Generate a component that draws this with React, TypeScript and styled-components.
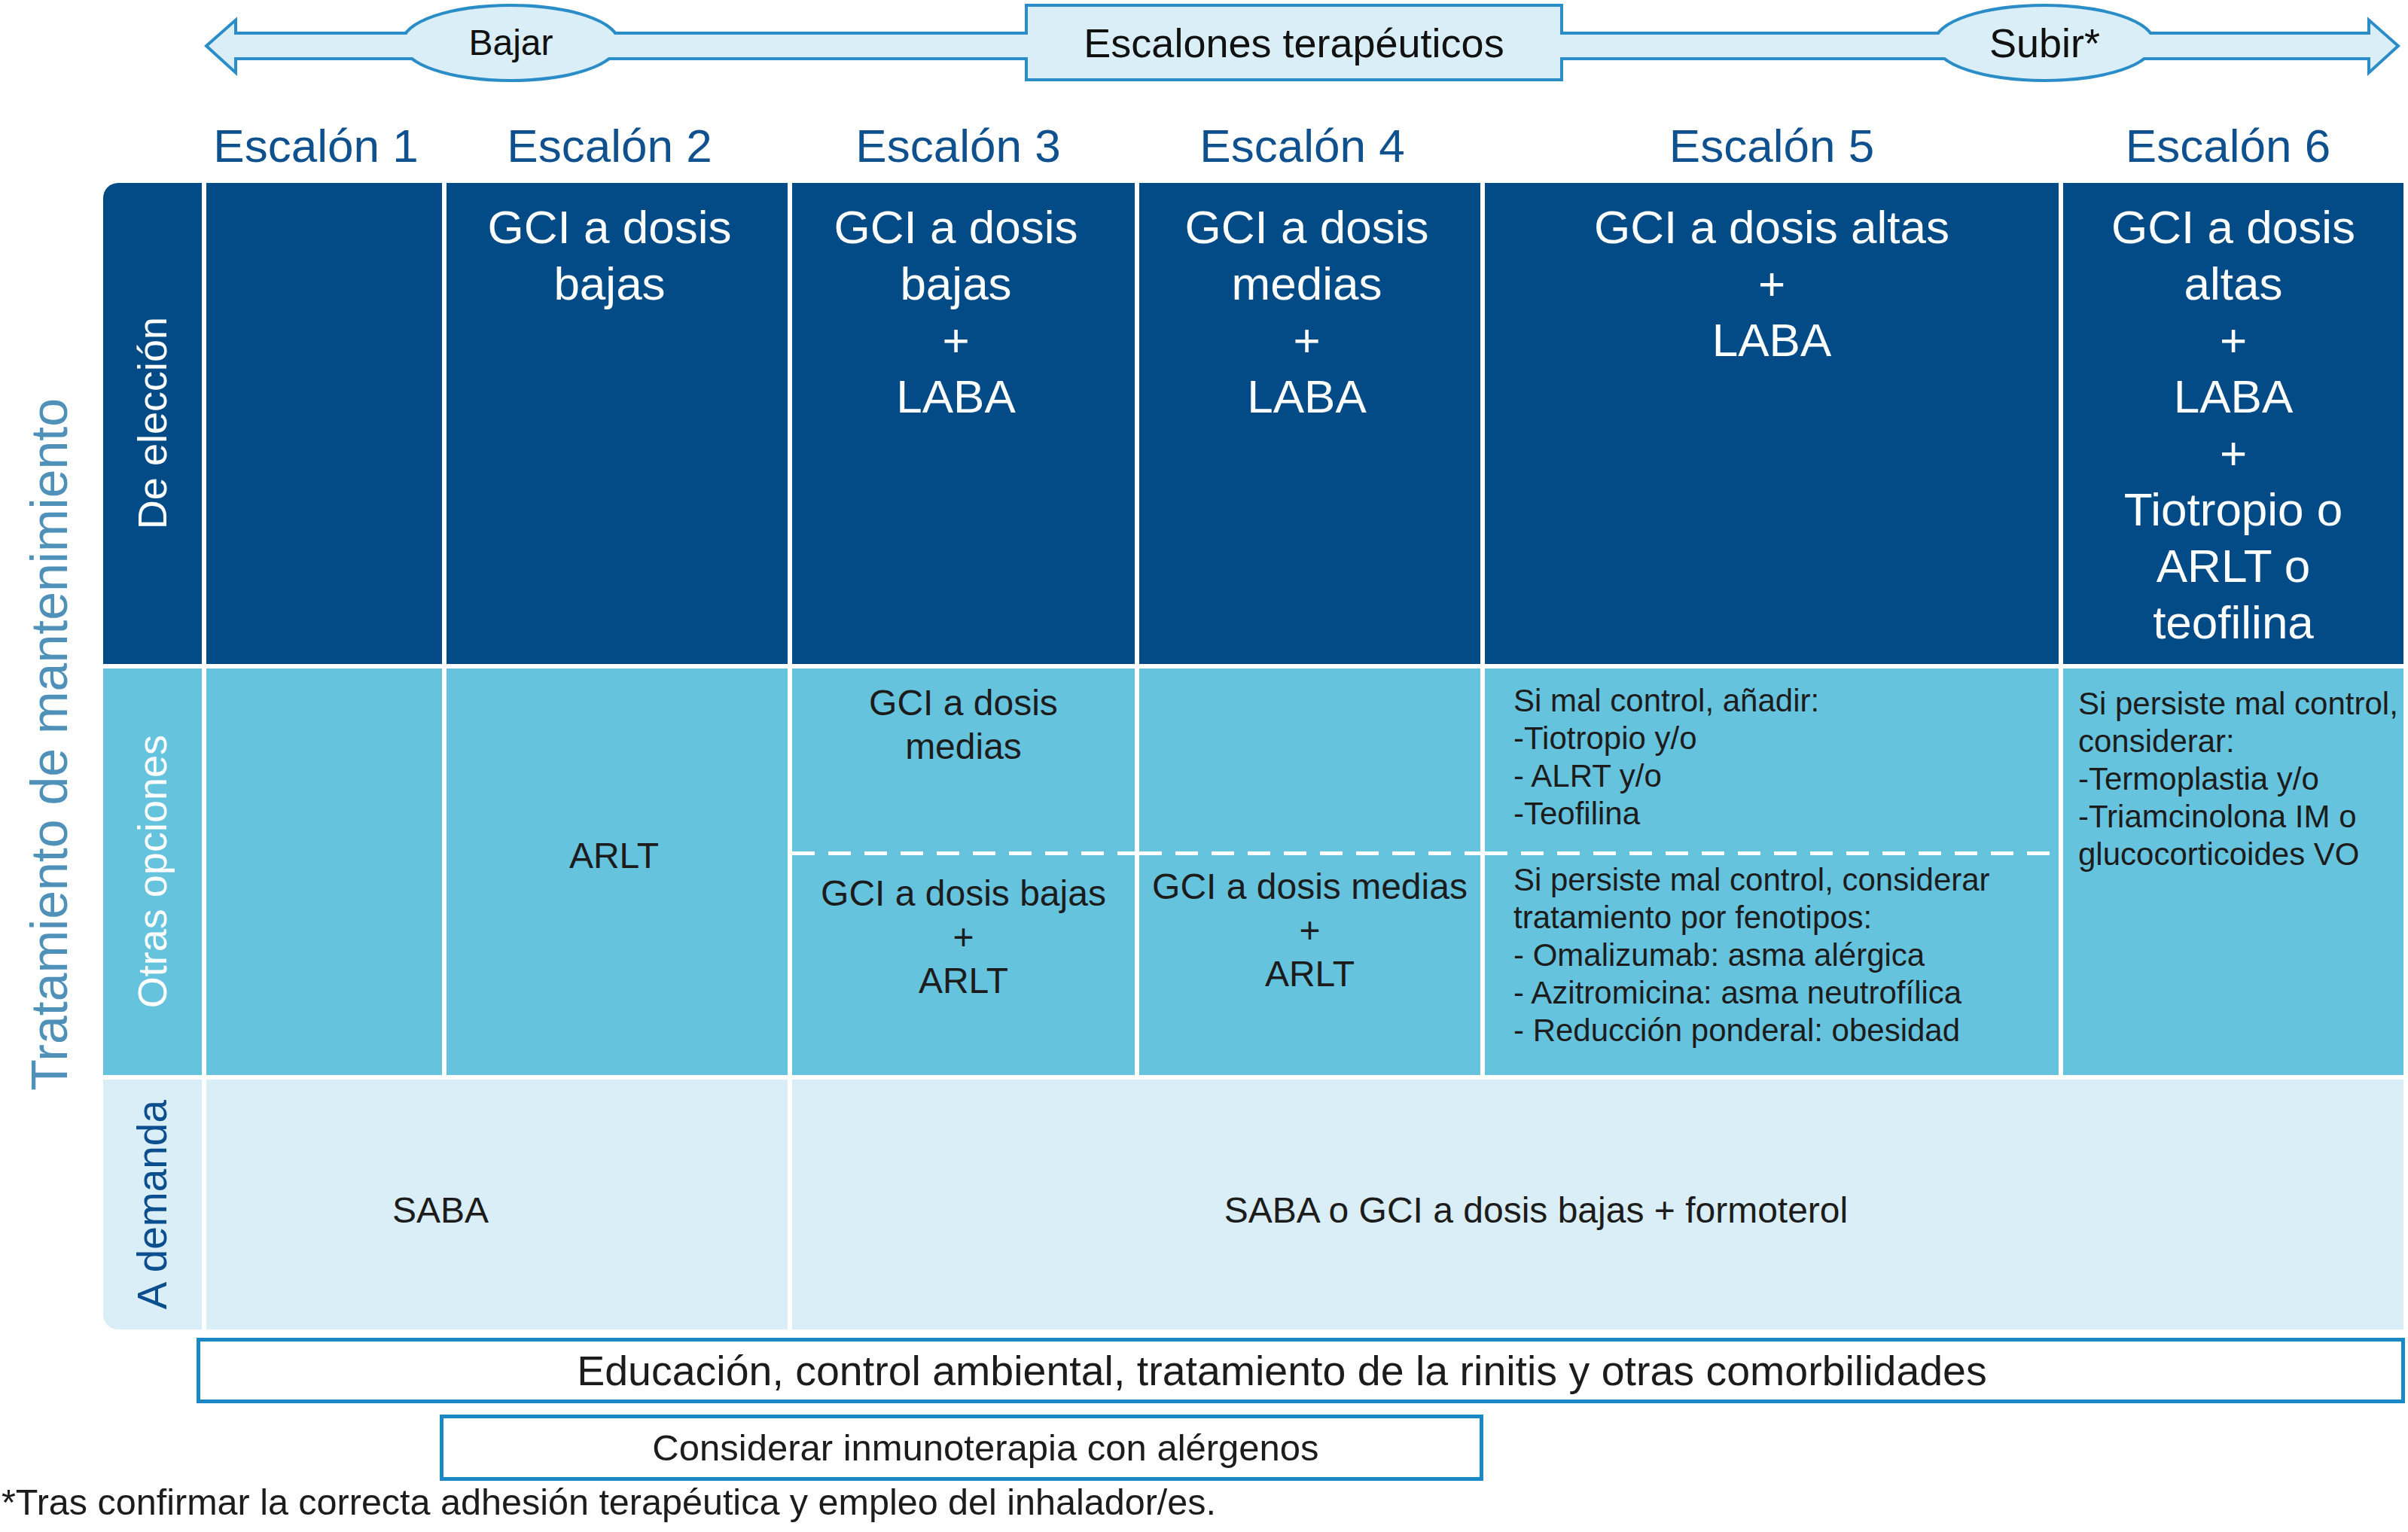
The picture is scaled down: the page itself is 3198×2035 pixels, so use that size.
import React from 'react';
import styled, { createGlobalStyle } from 'styled-components';

const NAVY = '#034b87';
const CYAN = '#66c3de';
const PALE = '#d9eef6';
const LINE = '#2a8dc8';
const INK = '#1c1c1c';

const GlobalStyle = createGlobalStyle`
  html, body {
    margin: 0;
    padding: 0;
    background: #fff;
  }
  body {
    font-family: "Liberation Sans", Arial, sans-serif;
  }
`;

const Page = styled.div`
  width: 3198px;
  min-height: 2035px;
  display: flex;
  flex-direction: column;
  overflow: hidden;
`;

/**
 * Flecha de escalones (Bajar / Subir)
 */
const StepBar = styled.div`
  position: relative;
  height: 110px;
  display: grid;
  grid-template-columns: 533px 291px 537px 715px 492px 295px 1fr;
  align-items: center;
`;

const ArrowArt = styled.svg`
  position: absolute;
  left: 0;
  top: 0;
  width: 3198px;
  height: 110px;
`;

interface IStepLabelProps {
  $col: number;
  $size: number;
}
const StepLabel = styled.div<IStepLabelProps>`
  position: relative;
  grid-row: 1;
  grid-column: ${(p) => p.$col};
  text-align: center;
  font-size: ${(p) => p.$size}px;
  line-height: 1.15;
  color: #111;
  padding-top: 4px;
`;

/**
 * Tabla principal
 */
const Chart = styled.div`
  display: grid;
  grid-template-columns: 131px 131px 313px 453px 455px 453px 762px 452px;
  grid-template-rows: 127px 639px 540px 332px;
  column-gap: 6px;
  row-gap: 6px;
`;

const StepHeader = styled.div<{ $col: number; $shift: number }>`
  grid-row: 1;
  grid-column: ${(p) => p.$col};
  display: flex;
  align-items: flex-end;
  justify-content: center;
  padding-bottom: 12px;
  padding-right: ${(p) => p.$shift}px;
  font-size: 62px;
  line-height: 62px;
  color: #0e518e;
  white-space: nowrap;
`;

const SideTitle = styled.div`
  grid-column: 1;
  grid-row: 2 / 5;
  display: flex;
  align-items: center;
  justify-content: center;
  padding-bottom: 32px;
`;

const VerticalText = styled.span<{ $color: string; $size: number }>`
  writing-mode: vertical-rl;
  transform: rotate(180deg);
  white-space: nowrap;
  font-size: ${(p) => p.$size}px;
  line-height: 1.1;
  color: ${(p) => p.$color};
`;

interface ICellProps {
  $tone: string;
  $row: number;
  $col: string;
  $corner?: string;
}
const Cell = styled.div<ICellProps>`
  grid-row: ${(p) => p.$row};
  grid-column: ${(p) => p.$col};
  background: ${(p) => p.$tone};
  border-radius: ${(p) => p.$corner || '0'};
  display: flex;
  flex-direction: column;
  min-width: 0;
`;

const RowHead = styled(Cell)`
  align-items: center;
  justify-content: center;
`;

const ChoiceText = styled.div<{ $shift: number }>`
  padding-top: 21px;
  padding-right: ${(p) => p.$shift}px;
  text-align: center;
  color: #fff;
  font-size: 62px;
  line-height: 75px;
`;

const CenterText = styled.div<{ $pt: number; $pr?: number }>`
  padding-top: ${(p) => p.$pt}px;
  padding-right: ${(p) => p.$pr || 0}px;
  text-align: center;
  color: ${INK};
  font-size: 48px;
  line-height: 58px;
`;

const NoteText = styled.div<{ $pt: number; $pl: number }>`
  padding-top: ${(p) => p.$pt}px;
  padding-left: ${(p) => p.$pl}px;
  text-align: left;
  color: ${INK};
  font-size: 42px;
  line-height: 50px;
`;

const Line = styled.div`
  white-space: nowrap;
`;

const Upper = styled.div`
  height: 243px;
`;

const Dash = styled.div`
  height: 5px;
  background: repeating-linear-gradient(90deg, #fff 0 30px, transparent 30px 48px);
`;

const Lower = styled.div`
  flex: 1;
`;

const DemandCell = styled(Cell)`
  align-items: center;
  justify-content: center;
`;

/**
 * Recuadros inferiores
 */
interface IBoxProps {
  $left: number;
  $width: number;
  $height: number;
  $top: number;
  $size: number;
  $nudge: number;
}
const InfoBox = styled.div<IBoxProps>`
  box-sizing: border-box;
  margin-top: ${(p) => p.$top}px;
  margin-left: ${(p) => p.$left}px;
  width: ${(p) => p.$width}px;
  height: ${(p) => p.$height}px;
  border: 5px solid #1b88c6;
  display: flex;
  align-items: center;
  justify-content: center;
  padding-left: ${(p) => Math.max(p.$nudge, 0)}px;
  padding-right: ${(p) => Math.max(-p.$nudge, 0)}px;
  font-size: ${(p) => p.$size}px;
  color: ${INK};
  white-space: nowrap;
`;

const Footnote = styled.p`
  margin: 0;
  padding-left: 2px;
  font-size: 48.5px;
  line-height: 56px;
  color: ${INK};
  white-space: nowrap;
`;

const lines = (items: string[]) => items.map((t, i) => <Line key={i}>{t}</Line>);

const arrowShapes = (
  <>
    <polygon points="277,61 311,31 311,46 3148,46 3148,31 3182,61 3148,92 3148,76 311,76 311,92" />
    <ellipse cx="678" cy="57" rx="142" ry="48" />
    <rect x="1365" y="9" width="707" height="95" />
    <ellipse cx="2715" cy="57" rx="144" ry="48" />
  </>
);

const steps = ['Escalón 1', 'Escalón 2', 'Escalón 3', 'Escalón 4', 'Escalón 5', 'Escalón 6'];
const headerShift = [22, 20, 14, 20, 0, 14];

const choice: string[][] = [
  [],
  ['GCI a dosis', 'bajas'],
  ['GCI a dosis', 'bajas', '+', 'LABA'],
  ['GCI a dosis', 'medias', '+', 'LABA'],
  ['GCI a dosis altas', '+', 'LABA'],
  ['GCI a dosis', 'altas', '+', 'LABA', '+', 'Tiotropio o', 'ARLT o', 'teofilina'],
];
const choiceShift = [0, 20, 20, 8, 0, -6];

const App: React.FC = () => {
  return (
    <Page>
      <GlobalStyle />
      <StepBar>
        <ArrowArt viewBox="0 0 3198 110">
          <g fill={LINE} stroke={LINE} strokeWidth={8} strokeLinejoin="miter">
            {arrowShapes}
          </g>
          <g fill={PALE}>{arrowShapes}</g>
        </ArrowArt>
        <StepLabel $col={2} $size={48}>Bajar</StepLabel>
        <StepLabel $col={4} $size={54}>Escalones terapéuticos</StepLabel>
        <StepLabel $col={6} $size={54}>Subir*</StepLabel>
      </StepBar>

      <Chart>
        {steps.map((s, i) => (
          <StepHeader key={s} $col={i + 3} $shift={headerShift[i]}>{s}</StepHeader>
        ))}

        <SideTitle>
          <VerticalText $color="#4f91b9" $size={68}>Tratamiento de mantenimiento</VerticalText>
        </SideTitle>

        {/* De elección */}
        <RowHead $tone={NAVY} $row={2} $col="2" $corner="20px 0 0 0">
          <VerticalText $color="#fff" $size={54}>De elección</VerticalText>
        </RowHead>
        {choice.map((c, i) => (
          <Cell key={i} $tone={NAVY} $row={2} $col={String(i + 3)}>
            <ChoiceText $shift={choiceShift[i]}>{lines(c)}</ChoiceText>
          </Cell>
        ))}

        {/* Otras opciones */}
        <RowHead $tone={CYAN} $row={3} $col="2">
          <VerticalText $color="#fff" $size={54}>Otras opciones</VerticalText>
        </RowHead>
        <Cell $tone={CYAN} $row={3} $col="3" />
        <Cell $tone={CYAN} $row={3} $col="4">
          <CenterText $pt={220} $pr={8}>ARLT</CenterText>
        </Cell>
        <Cell $tone={CYAN} $row={3} $col="5">
          <Upper>
            <CenterText $pt={17}>{lines(['GCI a dosis', 'medias'])}</CenterText>
          </Upper>
          <Dash />
          <Lower>
            <CenterText $pt={22}>{lines(['GCI a dosis bajas', '+', 'ARLT'])}</CenterText>
          </Lower>
        </Cell>
        <Cell $tone={CYAN} $row={3} $col="6">
          <Upper />
          <Dash />
          <Lower>
            <CenterText $pt={13}>{lines(['GCI a dosis medias', '+', 'ARLT'])}</CenterText>
          </Lower>
        </Cell>
        <Cell $tone={CYAN} $row={3} $col="7">
          <Upper>
            <NoteText $pt={18} $pl={38}>
              {lines(['Si mal control, añadir:', '-Tiotropio y/o', '- ALRT y/o', '-Teofilina'])}
            </NoteText>
          </Upper>
          <Dash />
          <Lower>
            <NoteText $pt={8} $pl={38}>
              {lines([
                'Si persiste mal control, considerar',
                'tratamiento por fenotipos:',
                '- Omalizumab: asma alérgica',
                '- Azitromicina: asma neutrofílica',
                '- Reducción ponderal: obesidad',
              ])}
            </NoteText>
          </Lower>
        </Cell>
        <Cell $tone={CYAN} $row={3} $col="8">
          <NoteText $pt={22} $pl={20}>
            {lines([
              'Si persiste mal control,',
              'considerar:',
              '-Termoplastia y/o',
              '-Triamcinolona IM o',
              'glucocorticoides VO',
            ])}
          </NoteText>
        </Cell>

        {/* A demanda */}
        <RowHead $tone={PALE} $row={4} $col="2" $corner="0 0 0 20px">
          <VerticalText $color="#0b4f8f" $size={55}>A demanda</VerticalText>
        </RowHead>
        <DemandCell $tone={PALE} $row={4} $col="3 / 5">
          <CenterText $pt={16} $pr={150}>SABA</CenterText>
        </DemandCell>
        <DemandCell $tone={PALE} $row={4} $col="5 / 9">
          <CenterText $pt={16} $pr={164}>SABA o GCI a dosis bajas + formoterol</CenterText>
        </DemandCell>
      </Chart>

      <InfoBox $top={11} $left={261} $width={2933} $height={87} $size={55.5} $nudge={-50}>
        Educación, control ambiental, tratamiento de la rinitis y otras comorbilidades
      </InfoBox>
      <InfoBox $top={15} $left={584} $width={1386} $height={88} $size={49} $nudge={64}>
        Considerar inmunoterapia con alérgenos
      </InfoBox>
      <Footnote>*Tras confirmar la correcta adhesión terapéutica y empleo del inhalador/es.</Footnote>
    </Page>
  );
};

export default App;
